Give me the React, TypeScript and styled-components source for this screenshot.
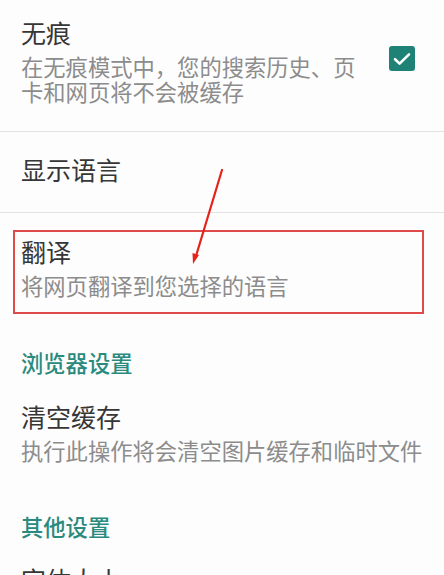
import React from 'react';
import styled, { createGlobalStyle } from 'styled-components';

const GlobalStyle = createGlobalStyle`
  html, body {
    margin: 0;
    padding: 0;
    background: #fdfdfd;
  }
  body {
    font-family: 'Noto Sans CJK SC', 'Noto Sans', sans-serif;
  }
`;

const Screen = styled.div`
  position: relative;
  width: 444px;
  height: 575px;
  overflow: hidden;
  background: #fdfdfd;
`;

const Row = styled.div<{ $pt?: number; $pb?: number; $divider?: boolean }>`
  display: flex;
  align-items: center;
  gap: 22px;
  padding: ${(p) => p.$pt ?? 20}px 12px ${(p) => p.$pb ?? 20}px 21px;
  border-bottom: ${(p) => (p.$divider ? '1px solid #e3e3e3' : 'none')};
`;

const TextBlock = styled.div`
  flex: 1;
  min-width: 0;
`;

const Title = styled.div`
  font-size: 25px;
  line-height: 30px;
  color: #363636;
`;

const Summary = styled.div<{ $mt?: number }>`
  margin-top: ${(p) => p.$mt ?? 6}px;
  font-size: 22.3px;
  line-height: 25px;
  color: #8c8c8c;
`;

const Highlight = styled.div`
  margin: 17px 20px 0 13px;
  padding: 4px 8px 14px 6px;
  border: 2px solid #df4a4a;
`;

const SectionHeader = styled.div<{ $pt: number }>`
  padding: ${(p) => p.$pt}px 21px 0;
  font-size: 22.3px;
  line-height: 28px;
  font-weight: 500;
  color: #2a8a7e;
`;

const CheckBox = styled.div`
  flex: none;
  width: 26px;
  height: 25px;
  margin: -4px 17px 0 0;
  border-radius: 3px;
  background: #1f8276;
  display: flex;
  align-items: center;
  justify-content: center;
`;

const ArrowLayer = styled.svg`
  position: absolute;
  left: 0;
  top: 0;
  pointer-events: none;
`;

export default function App() {
  return (
    <Screen>
      <GlobalStyle />
      <Row $pt={17} $pb={27} $divider>
        <TextBlock>
          <Title>无痕</Title>
          <Summary $mt={7}>在无痕模式中，您的搜索历史、页卡和网页将不会被缓存</Summary>
        </TextBlock>
        <CheckBox>
          <svg width="18" height="14" viewBox="0 0 18 14">
            <path
              d="M2 7.2 L6.6 11.6 L16 2.4"
              fill="none"
              stroke="#ffffff"
              strokeWidth="2.6"
              strokeLinecap="round"
              strokeLinejoin="round"
            />
          </svg>
        </CheckBox>
      </Row>
      <Row $pt={22} $pb={28} $divider>
        <TextBlock>
          <Title>显示语言</Title>
        </TextBlock>
      </Row>
      <Highlight>
        <Title>翻译</Title>
        <Summary $mt={7}>将网页翻译到您选择的语言</Summary>
      </Highlight>
      <SectionHeader $pt={34}>浏览器设置</SectionHeader>
      <Row $pt={25} $pb={16}>
        <TextBlock>
          <Title>清空缓存</Title>
          <Summary $mt={7}>执行此操作将会清空图片缓存和临时文件</Summary>
        </TextBlock>
      </Row>
      <SectionHeader $pt={33}>其他设置</SectionHeader>
      <Row $pt={24} $pb={16}>
        <TextBlock>
          <Title>字体大小</Title>
        </TextBlock>
      </Row>
      <ArrowLayer width="444" height="575" viewBox="0 0 444 575">
        <line x1="222" y1="170" x2="196" y2="256" stroke="#e4231c" strokeWidth="2.2" strokeLinecap="round" />
        <path d="M193 264 L192.5 253 L199 255 Z" fill="#e4231c" />
      </ArrowLayer>
    </Screen>
  );
}
